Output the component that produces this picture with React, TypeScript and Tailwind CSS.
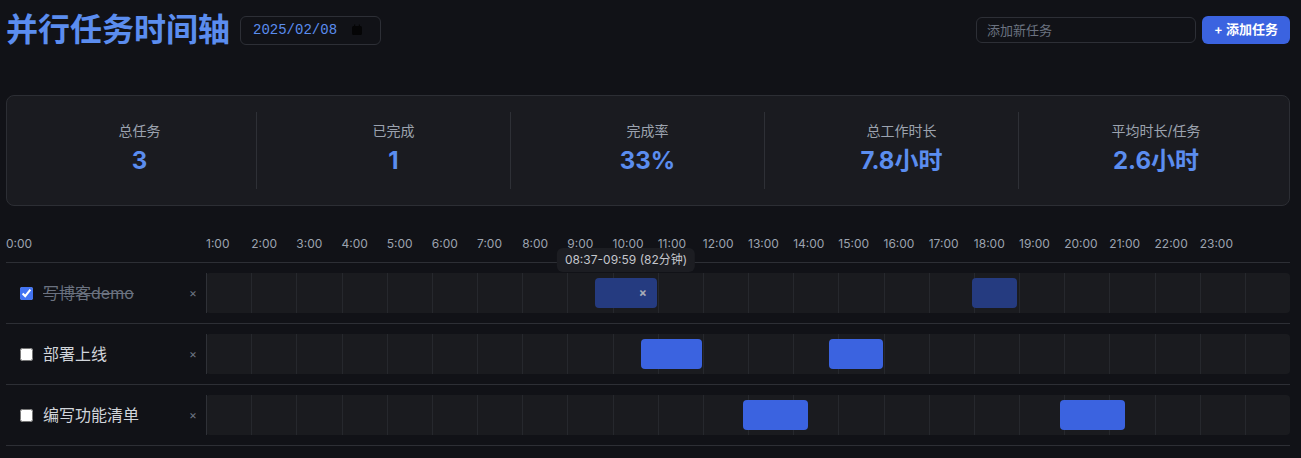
import { useState } from "react"

type Block = { start: string; end: string }
type Task = { id: number; name: string; done: boolean; blocks: Block[] }

const initialTasks: Task[] = [
    { id: 1, name: "写博客demo", done: true, blocks: [{ start: "08:37", end: "09:59" }, { start: "16:57", end: "17:57" }] },
    { id: 2, name: "部署上线", done: false, blocks: [{ start: "09:38", end: "10:59" }, { start: "13:48", end: "15:00" }] },
    { id: 3, name: "编写功能清单", done: false, blocks: [{ start: "11:53", end: "13:20" }, { start: "18:55", end: "20:21" }] },
]

const hours = Array.from({ length: 24 }, (_, i) => i)

function toMin(t: string) {
    const [h, m] = t.split(":").map(Number)
    return h * 60 + m
}

function CalendarIcon() {
    return (
        <svg width="12" height="12" viewBox="0 0 12 12" fill="none">
            <rect x="1" y="2" width="10" height="9" rx="1.5" fill="#050506" />
            <rect x="3" y="0.5" width="1.2" height="2.5" fill="#050506" />
            <rect x="7.8" y="0.5" width="1.2" height="2.5" fill="#050506" />
        </svg>
    )
}

export default function App() {
    const [tasks, setTasks] = useState(initialTasks)
    const [hovered] = useState("1-0") // tooltip on first block

    const total = tasks.length
    const done = tasks.filter((t) => t.done).length
    const minutes = tasks.reduce((s, t) => s + t.blocks.reduce((a, b) => a + toMin(b.end) - toMin(b.start), 0), 0)

    const stats = [
        { label: "总任务", value: `${total}` },
        { label: "已完成", value: `${done}` },
        { label: "完成率", value: `${Math.round((done / total) * 100)}%` },
        { label: "总工作时长", value: `${(minutes / 60).toFixed(1)}小时` },
        { label: "平均时长/任务", value: `${(minutes / 60 / total).toFixed(1)}小时` },
    ]

    return (
        <div className="min-h-screen bg-[#111217] pl-1.5 pr-[11px] font-['Inter','Noto_Sans_CJK_SC',sans-serif] text-[#d1d5db]">
            {/* Header */}
            <div className="flex h-[60px] items-center justify-between">
                <div className="flex items-center gap-2.5">
                    <h1 className="text-[32px] font-bold leading-10 text-[#5b8def]">并行任务时间轴</h1>
                    <div className="flex h-[29px] w-[141px] items-center justify-between rounded-md border border-[#2d2f36] pl-3 pr-[17px] font-['Liberation_Mono',monospace] text-sm text-[#5b8def]">
                        <span>2025/02/08</span>
                        <CalendarIcon />
                    </div>
                </div>
                <div className="flex items-center gap-1.5">
                    <input
                        placeholder="添加新任务"
                        className="h-[26px] w-[220px] rounded-md border border-[#2d2f36] bg-[#111217] px-2.5 text-[13px] text-[#d1d5db] outline-none placeholder:text-[#6b7280]"
                    />
                    <button className="h-7 rounded-md bg-[#3b63e0] px-3 text-[13px] font-semibold text-white">+ 添加任务</button>
                </div>
            </div>

            {/* Stats */}
            <div className="mt-[35px] grid grid-cols-5 gap-5 rounded-lg border border-[#2c2e34] bg-[#1a1b20] p-4">
                {stats.map((s, i) => (
                    <div
                        key={s.label}
                        className={`flex flex-col items-center gap-1 pt-[9px] pb-3 ${i < 4 ? "border-r border-[#2e3036]" : ""}`}
                    >
                        <div className="text-sm leading-5 text-[#9ca3af]">{s.label}</div>
                        <div className="text-2xl font-bold leading-8 text-[#5b8def]">{s.value}</div>
                    </div>
                ))}
            </div>

            {/* Timeline */}
            <div className="mt-[30px]">
                <div className="flex border-b border-[#2d2f35] pb-2.5 text-xs leading-4 text-[#9ca3af]">
                    <div className="w-[200px] shrink-0">0:00</div>
                    <div className="grid flex-1 grid-cols-24">
                        {hours.map((h) => (
                            <div key={h}>{h < 23 ? `${h + 1}:00` : ""}</div>
                        ))}
                    </div>
                </div>

                {tasks.map((t) => (
                    <div key={t.id} className="flex h-[61px] items-center border-b border-[#2d2f35]">
                        <div className="flex w-[200px] shrink-0 items-center gap-2.5 pl-[14px] pr-[9px]">
                            <input
                                type="checkbox"
                                checked={t.done}
                                onChange={() => setTasks(tasks.map((x) => (x.id === t.id ? { ...x, done: !x.done } : x)))}
                                className="h-[13px] w-[13px] accent-[#4374f3]"
                            />
                            <span className={`flex-1 text-base ${t.done ? "text-[#6b7280] line-through" : "text-[#d1d5db]"}`}>{t.name}</span>
                            <span className="text-xs text-[#6b7280]">×</span>
                        </div>
                        <div className="relative grid h-10 flex-1 grid-cols-24 rounded-sm bg-[#1a1b1f]">
                            {hours.map((h) => (
                                <div key={h} className={`border-l ${h === 0 ? "border-[#2f3137]" : "border-[#26282d]"}`} />
                            ))}
                            {t.blocks.map((b, i) => {
                                const s = toMin(b.start)
                                const e = toMin(b.end)
                                const isHover = hovered === `${t.id}-${i}`
                                return (
                                    <div
                                        key={i}
                                        className={`absolute top-[5px] flex h-[30px] items-center justify-end rounded pr-2.5 ${t.done ? "bg-[#253b80]" : "bg-[#3b63e0]"}`}
                                        style={{ left: `${(s / 1440) * 100}%`, width: `${((e - s) / 1440) * 100}%` }}
                                    >
                                        {isHover && (
                                            <>
                                                <span className="text-xs font-bold text-[#a8adb8]">×</span>
                                                <div className="absolute bottom-full left-1/2 mb-1.5 -translate-x-1/2 whitespace-nowrap rounded-md bg-[#1c1d22] px-2 py-1 text-xs leading-4 text-[#c4c6cc]">
                                                    {b.start}-{b.end} ({e - s}分钟)
                                                </div>
                                            </>
                                        )}
                                    </div>
                                )
                            })}
                        </div>
                    </div>
                ))}
            </div>
        </div>
    )
}
